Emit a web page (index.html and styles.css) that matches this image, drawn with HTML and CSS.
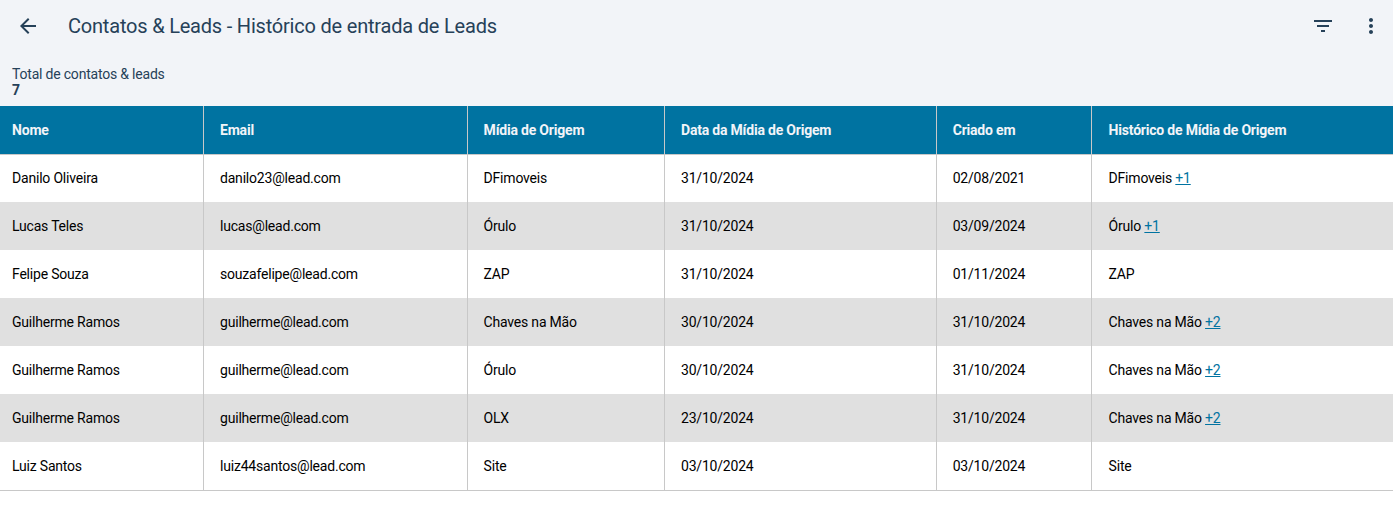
FILE: index.html
```html
<!DOCTYPE html>
<html lang="pt-BR">
<head>
<meta charset="utf-8">
<title>Contatos &amp; Leads</title>
<link rel="stylesheet" href="styles.css">
</head>
<body>
<header class="toolbar">
  <button class="icon-btn back" aria-label="Voltar">
    <svg width="24" height="24" viewBox="0 0 24 24"><path d="M20 11H7.83l5.59-5.59L12 4l-8 8 8 8 1.41-1.41L7.83 13H20v-2z"/></svg>
  </button>
  <h1 class="title">Contatos &amp; Leads - Histórico de entrada de Leads</h1>
  <div class="actions">
    <button class="icon-btn" aria-label="Filtrar">
      <svg width="24" height="24" viewBox="0 0 24 24"><path d="M10 18h4v-2h-4v2zM3 6v2h18V6H3zm3 7h12v-2H6v2z"/></svg>
    </button>
    <button class="icon-btn" aria-label="Mais">
      <svg width="24" height="24" viewBox="0 0 24 24"><path d="M12 8c1.1 0 2-.9 2-2s-.9-2-2-2-2 .9-2 2 .9 2 2 2zm0 2c-1.1 0-2 .9-2 2s.9 2 2 2 2-.9 2-2-.9-2-2-2zm0 6c-1.1 0-2 .9-2 2s.9 2 2 2 2-.9 2-2-.9-2-2-2z"/></svg>
    </button>
  </div>
</header>
<section class="summary">
  <div class="summary-label">Total de contatos &amp; leads</div>
  <div class="summary-value">7</div>
</section>
<table class="leads">
  <colgroup>
    <col class="c1"><col class="c2"><col class="c3"><col class="c4"><col class="c5"><col class="c6">
  </colgroup>
  <thead>
    <tr><th>Nome</th><th>Email</th><th class="col-media">Mídia de Origem</th><th>Data da Mídia de Origem</th><th class="col-created">Criado em</th><th class="col-history">Histórico de Mídia de Origem</th></tr>
  </thead>
  <tbody>
    <tr><td>Danilo Oliveira</td><td>danilo23@lead.com</td><td class="col-media">DFimoveis</td><td>31/10/2024</td><td class="col-created">02/08/2021</td><td class="col-history">DFimoveis <a href="#">+1</a></td></tr>
    <tr><td>Lucas Teles</td><td>lucas@lead.com</td><td class="col-media">Órulo</td><td>31/10/2024</td><td class="col-created">03/09/2024</td><td class="col-history">Órulo <a href="#">+1</a></td></tr>
    <tr><td>Felipe Souza</td><td>souzafelipe@lead.com</td><td class="col-media">ZAP</td><td>31/10/2024</td><td class="col-created">01/11/2024</td><td class="col-history">ZAP</td></tr>
    <tr><td>Guilherme Ramos</td><td>guilherme@lead.com</td><td class="col-media">Chaves na Mão</td><td>30/10/2024</td><td class="col-created">31/10/2024</td><td class="col-history">Chaves na Mão <a href="#">+2</a></td></tr>
    <tr><td>Guilherme Ramos</td><td>guilherme@lead.com</td><td class="col-media">Órulo</td><td>30/10/2024</td><td class="col-created">31/10/2024</td><td class="col-history">Chaves na Mão <a href="#">+2</a></td></tr>
    <tr><td>Guilherme Ramos</td><td>guilherme@lead.com</td><td class="col-media">OLX</td><td>23/10/2024</td><td class="col-created">31/10/2024</td><td class="col-history">Chaves na Mão <a href="#">+2</a></td></tr>
    <tr><td>Luiz Santos</td><td>luiz44santos@lead.com</td><td class="col-media">Site</td><td>03/10/2024</td><td class="col-created">03/10/2024</td><td class="col-history">Site</td></tr>
  </tbody>
</table>
</body>
</html>
```

FILE: styles.css
```css
* { box-sizing: border-box; }
html, body { margin: 0; padding: 0; }
body {
  background: #fff;
  font-family: Roboto, "Liberation Sans", sans-serif;
  color: #000;
  letter-spacing: -0.2px;
  overflow: hidden;
}
.toolbar {
  display: flex;
  align-items: center;
  height: 52px;
  padding: 0 10px 0 16px;
  background: #f2f4f8;
  color: #264159;
}
.icon-btn {
  display: flex;
  align-items: center;
  justify-content: center;
  width: 24px;
  height: 24px;
  padding: 0;
  border: 0;
  background: none;
  fill: #264159;
}
.title {
  margin: 0 0 0 28px;
  font-size: 20px;
  line-height: 24px;
  font-weight: 400;
}
.actions {
  display: flex;
  gap: 24px;
  margin-left: auto;
}
.summary {
  height: 54px;
  padding: 14px 12px 0;
  background: #f2f4f8;
  color: #264159;
  font-size: 14px;
  line-height: 16px;
}
.summary-value { font-weight: 700; }
.leads {
  width: 1393px;
  table-layout: fixed;
  border-collapse: separate;
  border-spacing: 0;
  font-size: 14px;
  border-bottom: 1px solid #c8c8c8;
}
.c1 { width: 204px; }
.c2 { width: 264px; }
.c3 { width: 197px; }
.c4 { width: 272px; }
.c5 { width: 155px; }
.c6 { width: 301px; }
.leads th {
  height: 48px;
  padding: 0 12px 0 16px;
  background: #0073a1;
  color: #f2f4f8;
  font-weight: 700;
  text-align: left;
  border-right: 1px solid #c8c8c8;
  box-shadow: 0 1px 0 #c8c8c8;
}
.leads td {
  height: 48px;
  padding: 0 12px 0 16px;
  border-right: 1px solid #c8c8c8;
  white-space: nowrap;
}
.leads th:first-child, .leads td:first-child { padding-left: 12px; }
.leads th:last-child, .leads td:last-child { border-right: 0; }
.leads .col-media { padding-left: 15.6px; }
.leads .col-created { padding-left: 15.7px; }
.leads .col-history { padding-left: 16.6px; }
.leads tbody tr:nth-child(even) td { background: #e0e0e0; }
.leads a { color: #0073a1; text-decoration: underline; }
```
